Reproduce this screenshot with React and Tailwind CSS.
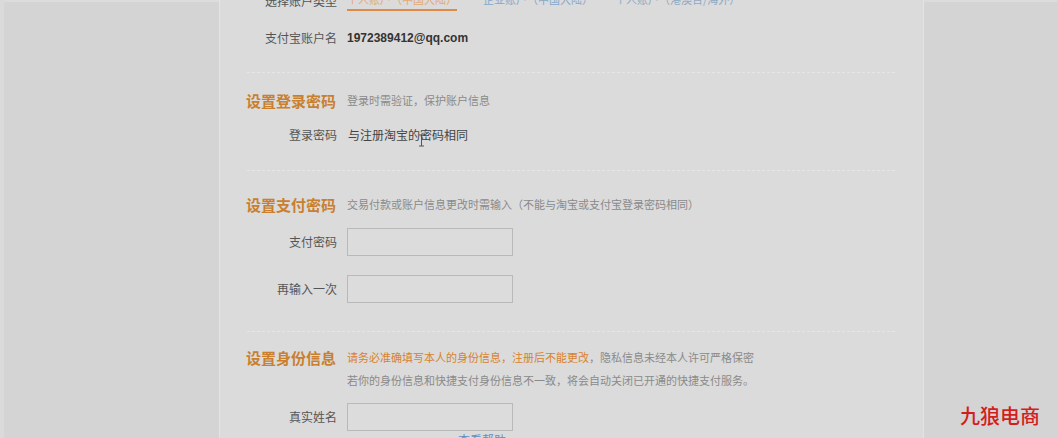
import React from 'react';

const font = { fontFamily: '"Noto Sans CJK SC", "Liberation Sans", sans-serif' };

// Label cell, right aligned against the 337px line
function Label({ children }) {
  return (
    <div className="w-[117px] shrink-0 text-right text-[12px] text-[#555]">
      {children}
    </div>
  );
}

function Sep({ h }) {
  return (
    <div className={`${h} flex items-center pl-[27px] pr-[28px]`}>
      <div className="w-full border-t border-dashed border-[#e6e6e6]" />
    </div>
  );
}

function Title({ children }) {
  return (
    <div className="w-[117px] shrink-0 pl-[26px] text-[15px] font-bold leading-[23px] text-[#c97f2e] whitespace-nowrap">
      {children}
    </div>
  );
}

function Input() {
  return (
    <div className="ml-[10px] h-[28px] w-[166px] border border-[#b9b9b9] bg-[#dcdcdc]" />
  );
}

export default function App() {
  return (
    <div
      className="relative flex h-[438px] w-full overflow-hidden bg-[#d4d4d4]"
      style={font}
    >
      <div className="w-[4px] shrink-0 bg-[#dadada]" />
      <div className="w-[215px] shrink-0 border-t-2 border-[#dcdcdc]" />

      <div className="w-[705px] shrink-0 border-l border-r border-[#e4e4e4] bg-[#dbdbdb]">
        <div className="-mt-[13px]">
          {/* account type */}
          <div className="flex h-[28px] items-center">
            <Label>选择账户类型</Label>
            <div className="ml-[10px] flex items-center text-[11px]">
              <span className="border-b-2 border-[#e08a45] pb-[2px] text-[#e3a977]">
                个人账户（中国大陆）
              </span>
              <span className="ml-[26px] pb-[4px] text-[#85a9cb]">
                企业账户（中国大陆）
              </span>
              <span className="ml-[22px] pb-[4px] text-[#8faac4]">
                个人账户（港澳台/海外）
              </span>
            </div>
          </div>

          <div className="flex h-[45px] items-center">
            <Label>支付宝账户名</Label>
            <span
              className="ml-[10px] text-[12px] font-bold text-[#333]"
              style={{ fontFamily: '"Liberation Sans", sans-serif' }}
            >
              1972389412@qq.com
            </span>
          </div>

          <Sep h="h-[24px]" />

          <div className="flex h-[32px] items-center">
            <Title>设置登录密码</Title>
            <span className="ml-[10px] text-[11px] text-[#8a8a8a]">
              登录时需验证，保护账户信息
            </span>
          </div>

          <div className="relative flex h-[38px] items-center">
            <Label>登录密码</Label>
            <span className="ml-[11px] text-[12px] text-[#444]">
              与注册淘宝的密码相同
            </span>
            <svg
              className="absolute left-[198px] top-[18px]"
              width="7"
              height="13"
              viewBox="0 0 7 13"
            >
              <path d="M1 1h5M3.5 1v11M1 12h5" stroke="#555" strokeWidth="1" fill="none" />
            </svg>
          </div>

          <Sep h="h-[32px]" />

          <div className="flex h-[36px] items-center">
            <Title>设置支付密码</Title>
            <span className="ml-[10px] text-[11px] text-[#8a8a8a] whitespace-nowrap">
              交易付款或账户信息更改时需输入（不能与淘宝或支付宝登录密码相同）
            </span>
          </div>

          <div className="flex h-[40px] items-center">
            <Label>支付密码</Label>
            <Input />
          </div>

          <div className="flex h-[54px] items-center">
            <Label>再输入一次</Label>
            <Input />
          </div>

          <Sep h="h-[30px]" />

          <div className="flex h-[46px] items-start">
            <Title>设置身份信息</Title>
            <div className="ml-[10px] text-[11px] leading-[23px] text-[#8a8a8a] whitespace-nowrap">
              <div>
                <span className="text-[#d9822b]">
                  请务必准确填写本人的身份信息，注册后不能更改
                </span>
                ，隐私信息未经本人许可严格保密
              </div>
              <div>若你的身份信息和快捷支付身份信息不一致，将会自动关闭已开通的快捷支付服务。</div>
            </div>
          </div>

          <div className="flex h-[40px] items-start pt-[11px]">
            <div className="flex h-[28px] items-center">
              <Label>真实姓名</Label>
            </div>
            <Input />
          </div>

          <div className="pl-[238px] text-[12px] leading-[16px] text-[#5d8fc4]">
            查看帮助
          </div>
        </div>
      </div>

      <div className="flex-1 border-t-2 border-[#dcdcdc]" />

      <div className="absolute left-[960px] top-[404px] text-[20px] font-medium leading-[24px] text-[#d41e1e]">
        九狼电商
      </div>
    </div>
  );
}
